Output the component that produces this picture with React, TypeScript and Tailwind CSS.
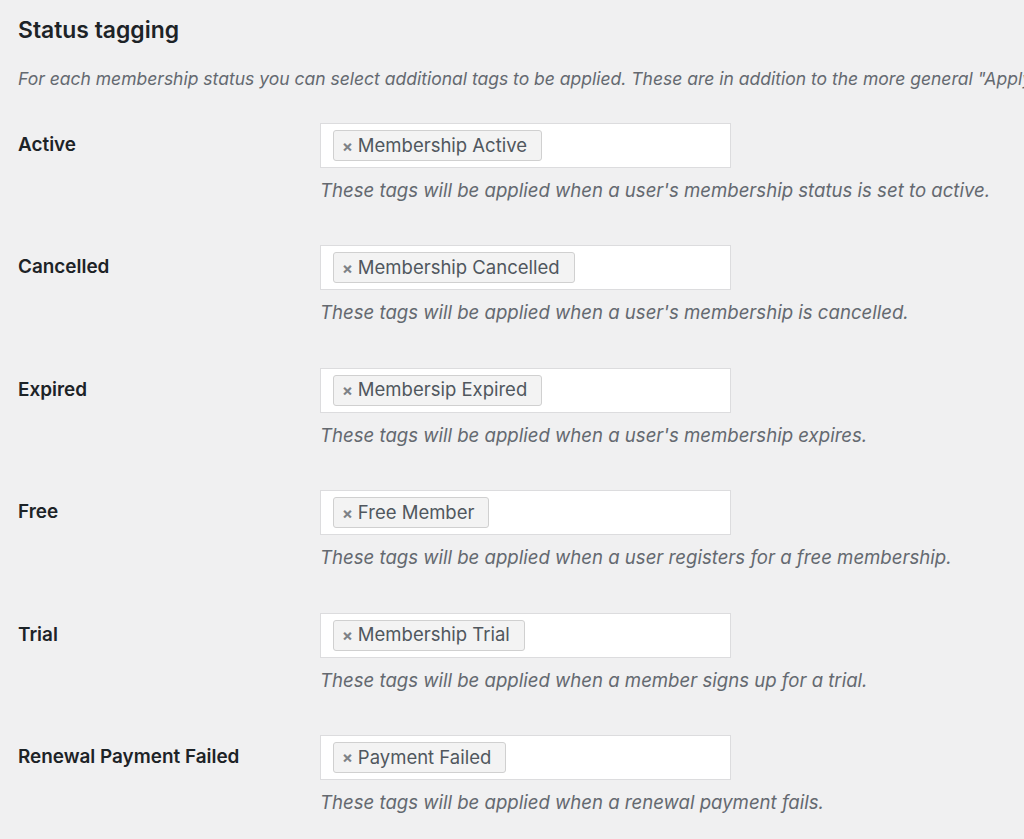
const rows = [
  { label: 'Active', tag: 'Membership Active', help: "These tags will be applied when a user's membership status is set to active." },
  { label: 'Cancelled', tag: 'Membership Cancelled', help: "These tags will be applied when a user's membership is cancelled." },
  { label: 'Expired', tag: 'Membersip Expired', help: "These tags will be applied when a user's membership expires." },
  { label: 'Free', tag: 'Free Member', help: 'These tags will be applied when a user registers for a free membership.' },
  { label: 'Trial', tag: 'Membership Trial', help: 'These tags will be applied when a member signs up for a trial.' },
  { label: 'Renewal Payment Failed', tag: 'Payment Failed', help: 'These tags will be applied when a renewal payment fails.' },
];

export default function App() {
  return (
    <div
      className="w-[1024px] h-[839px] overflow-hidden bg-[#f0f0f1] pl-[18px] text-[#1d2327]"
      style={{ fontFamily: 'Inter, "Liberation Sans", Arial, sans-serif' }}
    >
      <h2 className="pt-[16px] text-[22.9px] leading-[28px] font-semibold">Status tagging</h2>
      <p className="mt-[24px] whitespace-nowrap text-[17.5px] leading-[22px] italic text-[#646970]">
        For each membership status you can select additional tags to be applied. These are in addition to the more general "Apply tags" setting.
      </p>
      <div className="mt-[33px] flex flex-col">
        {rows.map((row) => (
          <div key={row.label} className="grid h-[122.4px] grid-cols-[302px_1fr]">
            <div className="pt-[10px] text-[18.9px] leading-[24px] font-semibold">{row.label}</div>
            <div>
              <div className="flex h-[45px] w-[411px] items-start border border-[#dcdcde] bg-white pl-[12px] pt-[6px]">
                <span className="flex h-[31px] items-center gap-[5px] rounded-[3px] border border-[#d0d0d0] bg-[#f3f3f3] pl-[8px] pr-[14px] text-[18.5px] text-[#50575e]">
                  <span className="text-[16px] font-bold text-[#7e8287]">×</span>
                  {row.tag}
                </span>
              </div>
              <p className="mt-[10px] whitespace-nowrap text-[18.6px] leading-[24px] italic text-[#646970]">{row.help}</p>
            </div>
          </div>
        ))}
      </div>
    </div>
  );
}
